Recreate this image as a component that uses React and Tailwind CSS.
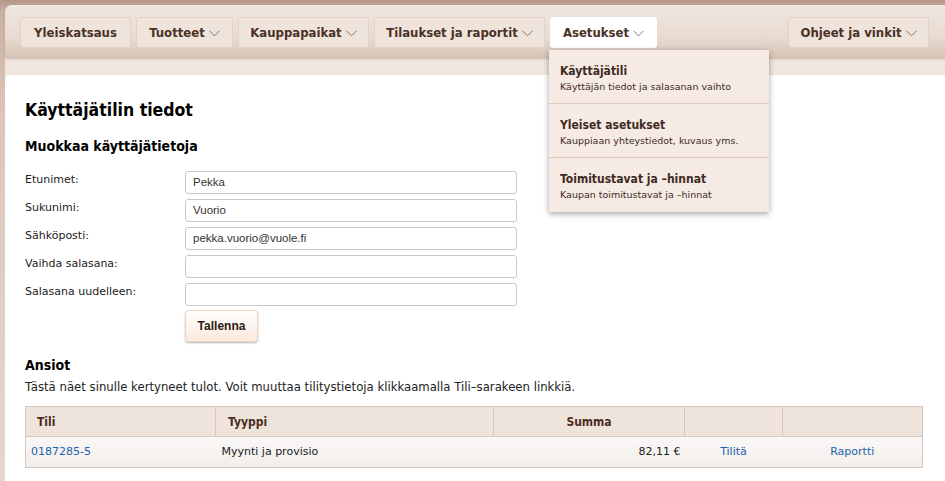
import React from "react";

const Chevron = () => (
  <svg width="11" height="7" viewBox="0 0 11 7" className="ml-[4px] mt-[2px]">
    <path d="M0.5 0.8 L5.5 5.8 L10.5 0.8" fill="none" stroke="#85746a" strokeWidth="1" />
  </svg>
);

const NavButton = ({ label, chevron, active, className = "" }) => (
  <div
    className={`h-[31px] flex items-center justify-center rounded-[3px] border font-['DejaVu_Sans_Condensed','DejaVu_Sans',sans-serif] text-[13px] font-bold text-[#4a3226] ${
      active ? "bg-white border-white" : "bg-[#efe4dc] border-[#e2d3c9]"
    } ${className}`}
  >
    {label}
    {chevron && <Chevron />}
  </div>
);

const menuItems = [
  { title: "Käyttäjätili", sub: "Käyttäjän tiedot ja salasanan vaihto" },
  { title: "Yleiset asetukset", sub: "Kauppiaan yhteystiedot, kuvaus yms." },
  { title: "Toimitustavat ja –hinnat", sub: "Kaupan toimitustavat ja –hinnat" },
];

const fields = [
  { label: "Etunimet:", value: "Pekka" },
  { label: "Sukunimi:", value: "Vuorio" },
  { label: "Sähköposti:", value: "pekka.vuorio@vuole.fi" },
  { label: "Vaihda salasana:", value: "" },
  { label: "Salasana uudelleen:", value: "" },
];

export default function App() {
  return (
    <div className="w-[945px] h-[481px] overflow-hidden bg-[linear-gradient(to_bottom,#b39686_0px,#c9b0a1_10px,#dcc7ba_120px,#e6d6cc_481px)] font-['DejaVu_Sans',sans-serif] pt-[5px] pl-[5px]">
      <div className="h-full rounded-tl-[7px] bg-[#f0e6df] flex flex-col">
        {/* nav bar */}
        <div className="relative h-[53px] rounded-tl-[7px] bg-[linear-gradient(to_bottom,#f0e7e0,#e8dbd1_60%,#d7c3b5)] flex items-start pt-[12px] pl-[15px] pr-[16px] gap-[5px] shadow-[0_1px_2px_rgba(120,90,70,0.3)]">
          <NavButton label="Yleiskatsaus" className="w-[111px]" />
          <NavButton label="Tuotteet" chevron className="w-[97px]" />
          <NavButton label="Kauppapaikat" chevron className="w-[131px]" />
          <NavButton label="Tilaukset ja raportit" chevron className="w-[171px]" />
          <div className="relative">
            <NavButton label="Asetukset" chevron active className="w-[107px]" />
            <div className="absolute left-[-1px] top-[33px] w-[220px] bg-[#f5ebe4] shadow-[0_2px_6px_rgba(0,0,0,0.35)] z-10">
              {menuItems.map((m, i) => (
                <div
                  key={m.title}
                  className={`h-[54px] pt-[13px] px-[11px] ${i < 2 ? "border-b border-[#dccabf]" : ""}`}
                >
                  <div className="font-['DejaVu_Sans_Condensed','DejaVu_Sans',sans-serif] text-[12px] font-bold text-[#3f2a1f] leading-[16px]">{m.title}</div>
                  <div className="text-[9.5px] text-[#3f2a1f] leading-[14px] mt-[1px]">{m.sub}</div>
                </div>
              ))}
            </div>
          </div>
          <NavButton label="Ohjeet ja vinkit" chevron className="w-[141px] ml-auto" />
        </div>
        <div className="h-[17px]" />
        {/* content */}
        <div className="flex-1 bg-white rounded-tl-[5px] pl-[20px] pt-[22px] text-black">
          <h1 className="font-['DejaVu_Sans_Condensed','DejaVu_Sans',sans-serif] text-[17.5px] font-bold leading-[26px]">Käyttäjätilin tiedot</h1>
          <h2 className="font-['DejaVu_Sans_Condensed','DejaVu_Sans',sans-serif] text-[14px] font-bold leading-[18px] mt-[14px]">Muokkaa käyttäjätietoja</h2>
          <div className="mt-[16px] flex flex-col gap-[5px]">
            {fields.map((f) => (
              <div key={f.label} className="flex items-start h-[23px]">
                <div className="w-[160px] text-[11px] text-[#222] leading-[16px] pt-[1px]">{f.label}</div>
                <div className="w-[332px] h-[23px] border border-[#c8c8c8] rounded-[3px] px-[7px] flex items-center font-['Liberation_Sans',sans-serif] text-[11.5px] text-[#333]">
                  {f.value}
                </div>
              </div>
            ))}
          </div>
          <div className="pl-[160px] mt-[4px]">
            <button className="w-[73px] h-[32px] rounded-[4px] border border-[#f0d6c4] bg-[linear-gradient(to_bottom,#ffffff,#fbe9dd)] shadow-[0_1px_2px_rgba(0,0,0,0.3)] font-['Liberation_Sans',sans-serif] font-bold text-[12px] text-[#2a1a10]">
              Tallenna
            </button>
          </div>
          <h2 className="font-['DejaVu_Sans_Condensed','DejaVu_Sans',sans-serif] text-[14px] font-bold leading-[18px] mt-[14px]">Ansiot</h2>
          <p className="text-[11.7px] text-[#222] leading-[16px] mt-[5px]">
            Tästä näet sinulle kertyneet tulot. Voit muuttaa tilitystietoja klikkaamalla Tili–sarakeen linkkiä.
          </p>
          <table className="mt-[11px] w-[898px] border-collapse border border-[#d6c6bc] text-[11px]">
            <thead>
              <tr className="h-[30px] bg-[#efe4dc] text-[#4a2c1c] font-bold font-['DejaVu_Sans_Condensed','DejaVu_Sans',sans-serif] text-[12px]">
                <th className="w-[190px] border border-[#d6c6bc] text-left pl-[11px]">Tili</th>
                <th className="w-[278px] border border-[#d6c6bc] text-left pl-[12px]">Tyyppi</th>
                <th className="w-[191px] border border-[#d6c6bc] text-center">Summa</th>
                <th className="w-[98px] border border-[#d6c6bc]"></th>
                <th className="border border-[#d6c6bc]"></th>
              </tr>
            </thead>
            <tbody>
              <tr className="h-[31px] bg-[linear-gradient(to_bottom,#faf8f7,#f1edea)] text-[#222]">
                <td className="pl-[5px] text-[#1d62ad]">0187285-5</td>
                <td className="pl-[6px]">Myynti ja provisio</td>
                <td className="text-right pr-[4px]">82,11 €</td>
                <td className="text-center text-[#1d62ad]">Tilitä</td>
                <td className="text-center text-[#1d62ad]">Raportti</td>
              </tr>
            </tbody>
          </table>
        </div>
      </div>
    </div>
  );
}
